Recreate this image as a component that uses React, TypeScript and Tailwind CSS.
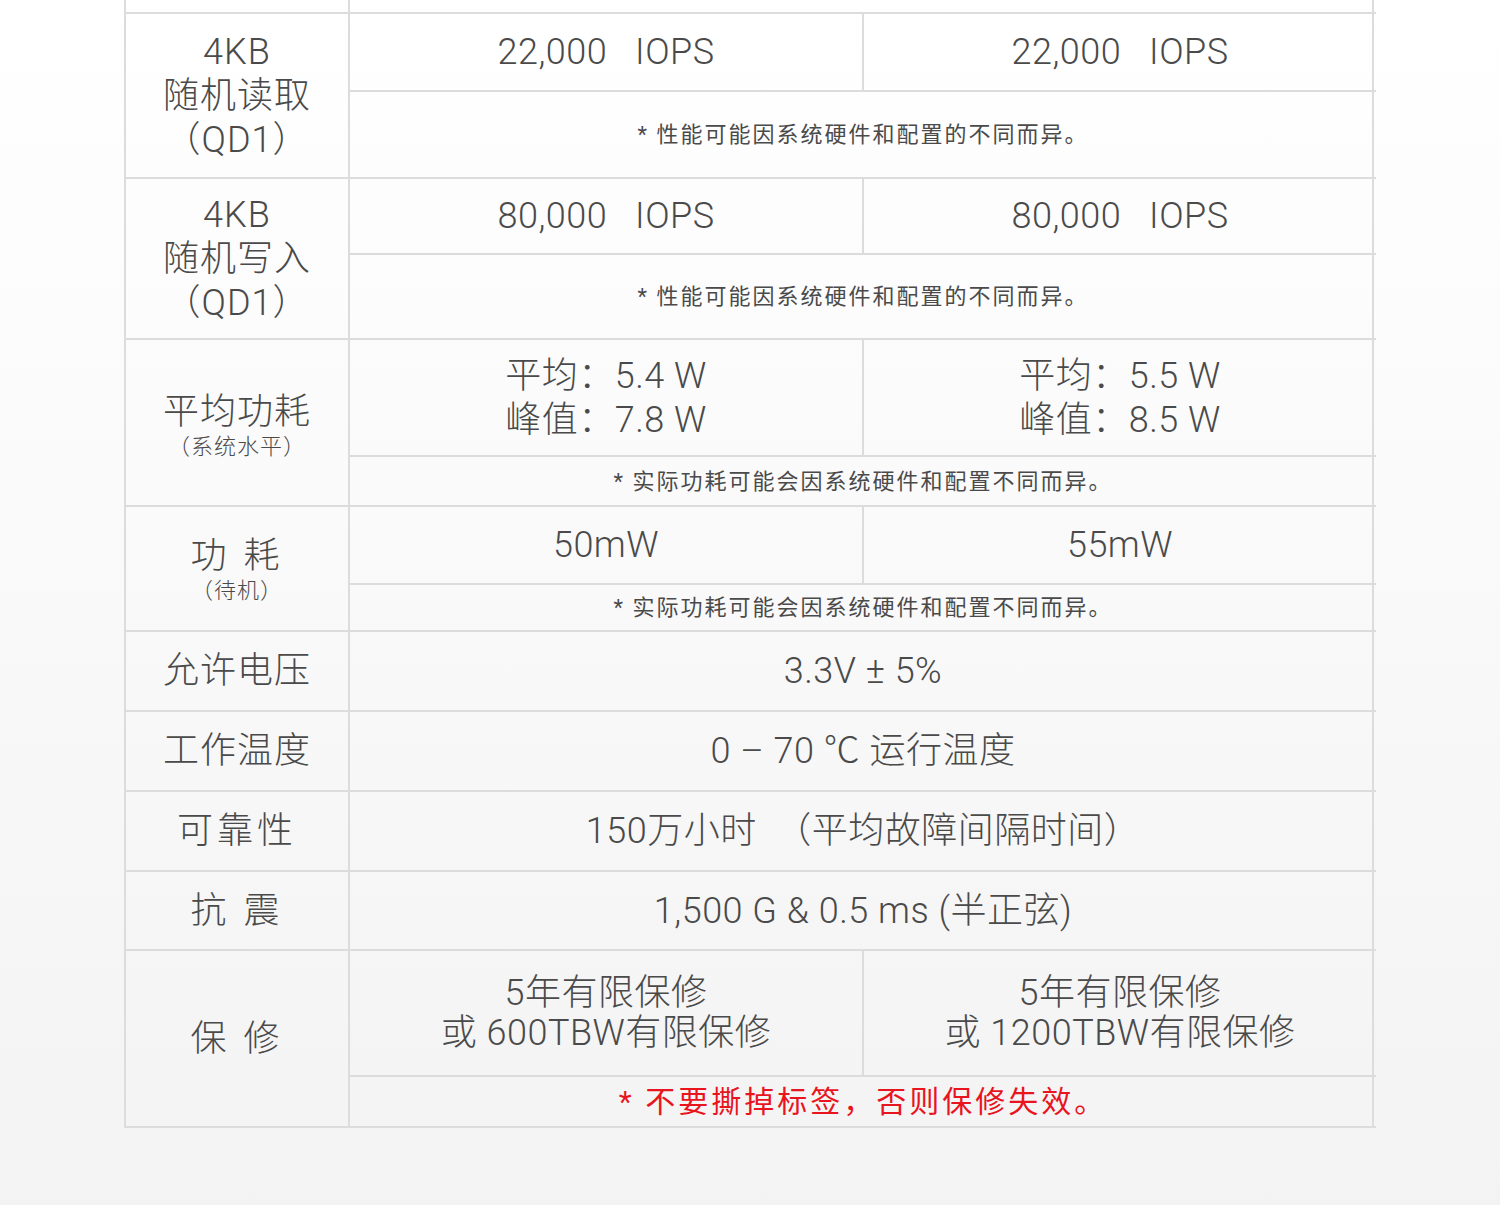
import React from 'react';

const FONT = { fontFamily: '"Roboto", "Noto Sans CJK SC", sans-serif' };

const perfNote = '* 性能可能因系统硬件和配置的不同而异。';
const powerNote = '* 实际功耗可能会因系统硬件和配置不同而异。';

const cell = 'flex items-center justify-center text-center border-b-2 border-[#dcdcdc]';
const label = `${cell} border-r-2 col-start-1 text-[36px] font-light leading-[44px] tracking-[1px]`;
const value = 'text-[36px] font-light tracking-[0.5px]';
const note = 'text-[22px] tracking-[2px]';
const sub = 'text-[22px] leading-[26px] tracking-[1px]';

const App = () => {
  return (
    <div
      className="w-[1500px] h-[1205px] bg-gradient-to-b from-white to-[#f3f3f3] text-[#4a4a4a] overflow-hidden"
      style={FONT}
    >
      <div className="ml-[124px] w-[1250px] grid grid-cols-[224px_514px_512px] grid-rows-[14px_78px_87px_76px_85px_117px_50px_78px_47px_80px_80px_80px_79px_126px_51px] border-l-2 border-r-2 border-[#dcdcdc]">
        {/* partial row from above */}
        <div className={`${cell} border-r-2 col-start-1 row-start-1`} />
        <div className={`${cell} col-start-2 col-span-2 row-start-1`} />

        {/* 4KB random read */}
        <div className={`${label} row-start-2 row-span-2 flex-col`}>
          <span>4KB</span>
          <span>随机读取</span>
          <span>（QD1）</span>
        </div>
        <div className={`${cell} ${value} col-start-2 row-start-2 border-r-2 whitespace-pre`}>22,000   IOPS</div>
        <div className={`${cell} ${value} col-start-3 row-start-2 whitespace-pre`}>22,000   IOPS</div>
        <div className={`${cell} ${note} col-start-2 col-span-2 row-start-3`}>{perfNote}</div>

        {/* 4KB random write */}
        <div className={`${label} row-start-4 row-span-2 flex-col`}>
          <span>4KB</span>
          <span>随机写入</span>
          <span>（QD1）</span>
        </div>
        <div className={`${cell} ${value} col-start-2 row-start-4 border-r-2 whitespace-pre`}>80,000   IOPS</div>
        <div className={`${cell} ${value} col-start-3 row-start-4 whitespace-pre`}>80,000   IOPS</div>
        <div className={`${cell} ${note} col-start-2 col-span-2 row-start-5`}>{perfNote}</div>

        {/* average power */}
        <div className={`${label} row-start-6 row-span-2 flex-col`}>
          <span className="mt-[4px]">平均功耗</span>
          <span className={sub}>（系统水平）</span>
        </div>
        <div className={`${cell} ${value} col-start-2 row-start-6 border-r-2`}>
          <div className="text-left leading-[44px]">
            <div>平均：5.4 W</div>
            <div>峰值：7.8 W</div>
          </div>
        </div>
        <div className={`${cell} ${value} col-start-3 row-start-6`}>
          <div className="text-left leading-[44px]">
            <div>平均：5.5 W</div>
            <div>峰值：8.5 W</div>
          </div>
        </div>
        <div className={`${cell} ${note} col-start-2 col-span-2 row-start-7`}>{powerNote}</div>

        {/* idle power */}
        <div className={`${label} row-start-8 row-span-2 flex-col`}>
          <span className="whitespace-pre tracking-[4px]">功 耗</span>
          <span className={sub}>（待机）</span>
        </div>
        <div className={`${cell} ${value} col-start-2 row-start-8 border-r-2`}>50mW</div>
        <div className={`${cell} ${value} col-start-3 row-start-8`}>55mW</div>
        <div className={`${cell} ${note} col-start-2 col-span-2 row-start-9`}>{powerNote}</div>

        {/* single value rows */}
        <div className={`${label} row-start-10`}>允许电压</div>
        <div className={`${cell} ${value} col-start-2 col-span-2 row-start-10`}>3.3V ± 5%</div>

        <div className={`${label} row-start-11`}>工作温度</div>
        <div className={`${cell} ${value} col-start-2 col-span-2 row-start-11 whitespace-pre`}>0 – 70 ℃ 运行温度</div>

        <div className={`${label} row-start-12 tracking-[4px]`}>可靠性</div>
        <div className={`${cell} ${value} col-start-2 col-span-2 row-start-12 whitespace-pre`}>150万小时  （平均故障间隔时间）</div>

        <div className={`${label} row-start-13 whitespace-pre tracking-[4px]`}>抗 震</div>
        <div className={`${cell} ${value} col-start-2 col-span-2 row-start-13`}>1,500 G &amp; 0.5 ms (半正弦)</div>

        {/* warranty */}
        <div className={`${label} row-start-14 row-span-2 whitespace-pre tracking-[4px]`}>保 修</div>
        <div className={`${cell} ${value} col-start-2 row-start-14 border-r-2 flex-col leading-[40px]`}>
          <span>5年有限保修</span>
          <span>或 600TBW有限保修</span>
        </div>
        <div className={`${cell} ${value} col-start-3 row-start-14 flex-col leading-[40px]`}>
          <span>5年有限保修</span>
          <span>或 1200TBW有限保修</span>
        </div>
        <div className={`${cell} col-start-2 col-span-2 row-start-15 text-[30px] text-[#e8141e] tracking-[3px]`}>
          * 不要撕掉标签，否则保修失效。
        </div>
      </div>
    </div>
  );
};

export default App;
